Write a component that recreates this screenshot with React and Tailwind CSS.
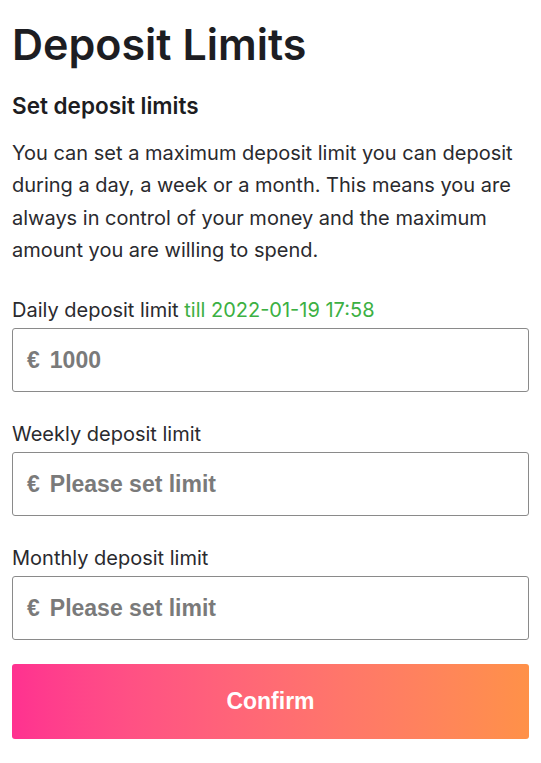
export default function App() {
  const fields = [
    { label: 'Daily deposit limit', note: 'till 2022-01-19 17:58', value: '1000' },
    { label: 'Weekly deposit limit', value: '' },
    { label: 'Monthly deposit limit', value: '' },
  ]

  return (
    <div className="min-h-screen bg-white px-3 font-['Inter',sans-serif] text-[#1d1d22]">
      <h1 className="pt-[14px] text-[43px] leading-[60px] font-semibold">Deposit Limits</h1>

      <h2 className="mt-[18px] text-[22.5px] leading-[28px] font-semibold">Set deposit limits</h2>

      <p className="mt-[17px] text-[20px] leading-[32.3px] text-[#2a2a2e]">
        You can set a maximum deposit limit you can deposit during a day, a week or a month. This means you are always in control of your money and the maximum amount you are willing to spend.
      </p>

      <div className="mt-[31px] flex flex-col gap-[29px]">
        {fields.map((f) => (
          <div key={f.label}>
            <label className="block text-[20px] leading-[26px] text-[#2a2a2e]">
              {f.label}
              {f.note && <span className="text-[#3cb043]"> {f.note}</span>}
            </label>
            <div className="mt-[5px] h-[64px] rounded-[3px] border border-[#8a8a8a] flex items-center px-[14px] font-['Liberation_Sans',Arial,sans-serif] font-bold text-[23px] text-[#7a7a7a]">
              <span className="mr-[10px]">€</span>
              <input
                className="flex-1 bg-transparent outline-none placeholder:text-[#7a7a7a] text-[#7a7a7a]"
                placeholder="Please set limit"
                defaultValue={f.value}
              />
            </div>
          </div>
        ))}
      </div>

      <button className="mt-[24px] w-full h-[75px] rounded-[3px] bg-gradient-to-r from-[#ff3190] to-[#ff9148] text-white font-['Liberation_Sans',Arial,sans-serif] font-bold text-[23px]">
        Confirm
      </button>
    </div>
  )
}
